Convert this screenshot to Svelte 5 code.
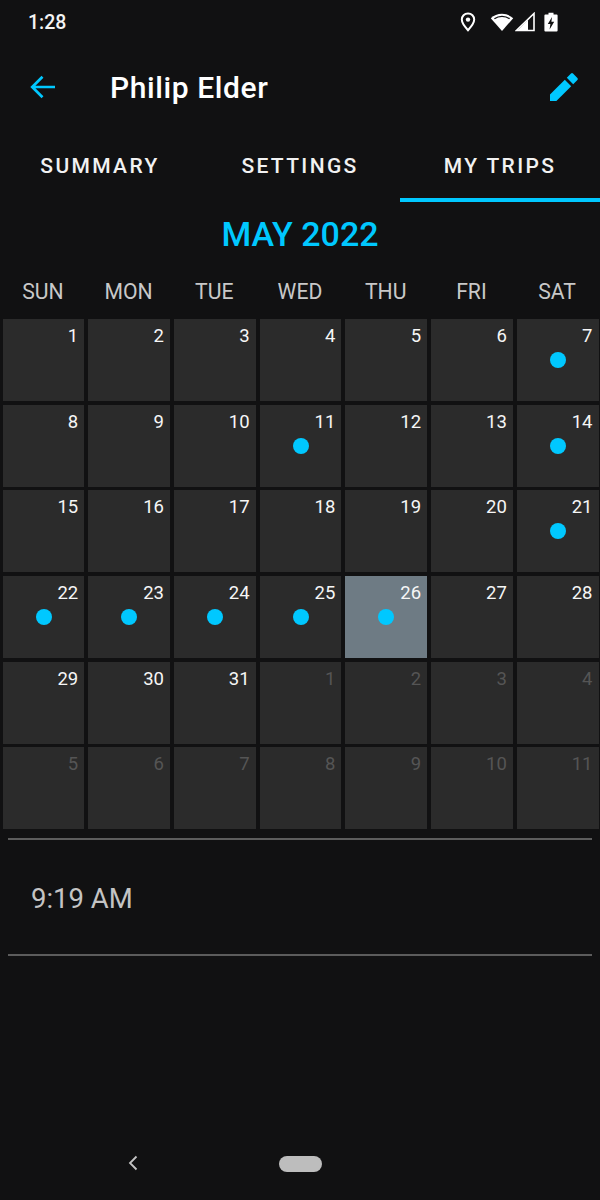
<script>
  const weekdays = ["SUN", "MON", "TUE", "WED", "THU", "FRI", "SAT"];
  const tabs = ["SUMMARY", "SETTINGS", "MY TRIPS"];
  const tripDays = [7, 11, 14, 21, 22, 23, 24, 25, 26];

  const days = [];
  for (let d = 1; d <= 31; d++) days.push({ n: d, muted: false });
  for (let d = 1; d <= 11; d++) days.push({ n: d, muted: true });
</script>

<div class="screen">
  <div class="status">
    <span class="clock">1:28</span>
    <div class="status-icons">
      <svg class="pin" width="16" height="20" viewBox="0 0 16 20">
        <path d="M8 1.5C4.4 1.5 1.8 4.2 1.8 7.6 1.8 11.6 8 18.2 8 18.2S14.2 11.6 14.2 7.6C14.2 4.2 11.6 1.5 8 1.5Z" fill="none" stroke="#fff" stroke-width="2" />
        <circle cx="8" cy="7.6" r="2.2" fill="#fff" />
      </svg>
      <svg class="wifi" width="24" height="20" viewBox="0 0 24 20">
        <path d="M0.8 6.2C3.8 3.4 7.6 1.8 12 1.8S20.2 3.4 23.2 6.2L12 19Z" fill="#fff" />
        <path d="M4.4 6.8C6.6 5.2 9.2 4.4 12 4.4S17.4 5.2 19.6 6.8" fill="none" stroke="#111112" stroke-width="1.3" />
      </svg>
      <svg class="signal" width="20" height="20" viewBox="0 0 20 20">
        <path d="M19 1.5V18.5H1.5Z" fill="none" stroke="#fff" stroke-width="1.6" />
        <path d="M13 8V18H3Z" fill="#fff" />
      </svg>
      <svg class="battery" width="14" height="20" viewBox="0 0 14 20">
        <path d="M4.5 0.8H9.5V2.4H12.6Q13.6 2.4 13.6 3.4V18.6Q13.6 19.6 12.6 19.6H1.4Q0.4 19.6 0.4 18.6V3.4Q0.4 2.4 1.4 2.4H4.5Z" fill="#fff" />
        <path d="M8 5 3.8 12H6.4L5.6 17.5 10.2 9.8H7.4Z" fill="#111" />
      </svg>
    </div>
  </div>

  <header class="toolbar">
    <svg class="back" width="26" height="24" viewBox="0 0 26 24">
      <path d="M25 12H3M12.5 1.8 2.2 12 12.5 22.2" fill="none" stroke="#00c8ff" stroke-width="2.7" />
    </svg>
    <h1>Philip Elder</h1>
    <svg class="edit" width="30" height="30" viewBox="0 0 30 30">
      <path d="M1 22.6V29H7.4L22.2 14.2 15.8 7.8Z" fill="#00c8ff" />
      <path d="M24.2 12.2 28.4 8Q29.4 7 28.4 6L24 1.6Q23 .6 22 1.6L17.8 5.8Z" fill="#00c8ff" />
    </svg>
  </header>

  <nav class="tabs">
    {#each tabs as tab, i}
      <div class="tab" class:active={i === 2}>{tab}</div>
    {/each}
  </nav>

  <h2 class="month">MAY 2022</h2>

  <div class="weekdays">
    {#each weekdays as day}
      <span>{day}</span>
    {/each}
  </div>

  <div class="grid">
    {#each days as day}
      <div
        class="cell"
        class:muted={day.muted}
        class:selected={!day.muted && day.n === 26}
      >
        <span class="num">{day.n}</span>
        {#if !day.muted && tripDays.includes(day.n)}
          <span class="dot"></span>
        {/if}
      </div>
    {/each}
  </div>

  <div class="trip-row">9:19 AM</div>

  <div class="navbar">
    <svg class="nav-back" width="12" height="16" viewBox="0 0 12 16">
      <path d="M9.5 1.5 3 8 9.5 14.5" fill="none" stroke="#c4c4c4" stroke-width="1.8" />
    </svg>
    <span class="home"></span>
  </div>
</div>

<style>
  :global(body) {
    margin: 0;
    background: #111112;
  }

  .screen {
    display: flex;
    flex-direction: column;
    width: 600px;
    height: 1200px;
    overflow: hidden;
    background: #111112;
    color: #fff;
    font-family: Roboto, "Noto Sans", sans-serif;
  }

  .status {
    display: flex;
    justify-content: space-between;
    align-items: center;
    height: 44px;
    padding: 0 42px 0 28px;
  }

  .clock {
    font-size: 19.5px;
    font-weight: 500;
    color: #f4f4f4;
  }

  .status-icons {
    display: flex;
    align-items: center;
  }

  .pin {
    margin-right: 14px;
  }

  .wifi {
    margin-right: 1px;
  }

  .signal {
    margin-right: 9px;
  }

  .toolbar {
    display: flex;
    align-items: center;
    height: 86px;
    padding: 0 21px 0 30px;
  }

  .toolbar h1 {
    flex: 1;
    margin: 0 0 0 54px;
    font-size: 30px;
    font-weight: 500;
    letter-spacing: 0.6px;
    color: #fff;
  }

  .tabs {
    display: flex;
    height: 72px;
  }

  .tab {
    flex: 1;
    display: flex;
    align-items: center;
    justify-content: center;
    box-sizing: border-box;
    padding-top: 0;
    font-size: 21px;
    font-weight: 500;
    letter-spacing: 2.35px;
    color: #f2f2f2;
  }

  .tab.active {
    border-bottom: 4px solid #00c8ff;
    padding-top: 4px;
  }

  .month {
    margin: 0;
    height: 64px;
    line-height: 64px;
    text-align: center;
    font-size: 34px;
    font-weight: 500;
    color: #00c8ff;
  }

  .weekdays {
    display: grid;
    grid-template-columns: repeat(7, 1fr);
    height: 51px;
    line-height: 52px;
    text-align: center;
    font-size: 21.2px;
    color: #c8c8c8;
  }

  .grid {
    display: grid;
    grid-template-columns: repeat(7, 1fr);
    grid-auto-rows: 85.67px;
  }

  .cell {
    position: relative;
    margin: 2px 1.5px 1.5px 2.5px;
    background: #2b2b2b;
  }

  .cell.selected {
    background: #6e7b84;
  }

  .num {
    position: absolute;
    top: 6px;
    right: 6px;
    font-size: 18.5px;
    line-height: 22px;
    color: #f6f6f6;
  }

  .muted .num {
    color: #555;
  }

  .dot {
    position: absolute;
    top: 33px;
    left: 33px;
    width: 16px;
    height: 16px;
    border-radius: 50%;
    background: #00c8ff;
  }

  .trip-row {
    margin: 7px 8px 0;
    height: 114px;
    padding-left: 23px;
    line-height: 118px;
    border-top: 2px solid #5c5c5c;
    border-bottom: 2px solid #5c5c5c;
    font-size: 27.5px;
    color: #c4c4c4;
  }

  .navbar {
    position: relative;
    margin-top: auto;
    height: 72px;
  }

  .nav-back {
    position: absolute;
    left: 127px;
    top: 27px;
  }

  .home {
    position: absolute;
    left: 279px;
    top: 28px;
    width: 43px;
    height: 16px;
    border-radius: 8px;
    background: #bdbdbd;
  }
</style>
